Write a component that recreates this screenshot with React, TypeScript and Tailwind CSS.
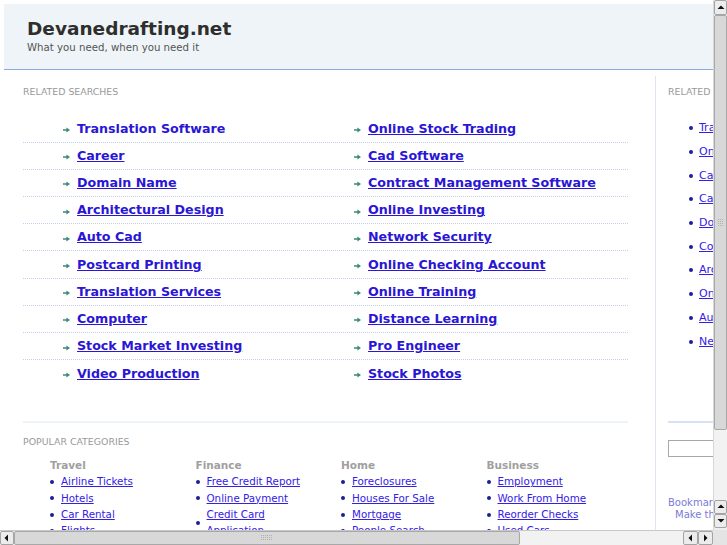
import React from "react";

const mainLinks: [string, string][] = [
  ["Translation Software", "Online Stock Trading"],
  ["Career", "Cad Software"],
  ["Domain Name", "Contract Management Software"],
  ["Architectural Design", "Online Investing"],
  ["Auto Cad", "Network Security"],
  ["Postcard Printing", "Online Checking Account"],
  ["Translation Services", "Online Training"],
  ["Computer", "Distance Learning"],
  ["Stock Market Investing", "Pro Engineer"],
  ["Video Production", "Stock Photos"],
];

const sideLinks = [
  "Translation Software",
  "Online Stock Trading",
  "Career",
  "Cad Software",
  "Domain Name",
  "Contract Management Software",
  "Architectural Design",
  "Online Investing",
  "Auto Cad",
  "Network Security",
];

const categories: { title: string; items: string[] }[] = [
  { title: "Travel", items: ["Airline Tickets", "Hotels", "Car Rental", "Flights"] },
  { title: "Finance", items: ["Free Credit Report", "Online Payment", "Credit Card Application", "Insurance"] },
  { title: "Home", items: ["Foreclosures", "Houses For Sale", "Mortgage", "People Search"] },
  { title: "Business", items: ["Employment", "Work From Home", "Reorder Checks", "Used Cars"] },
];

function Arrow() {
  return (
    <svg width="7" height="6" viewBox="0 0 7 6" className="shrink-0 mt-[3px]">
      <path d="M0 2.2h3.4V0.4L7 3 3.4 5.6V3.8H0z" fill="#3a8a7a" />
    </svg>
  );
}

function Tri({ dir }: { dir: "up" | "down" | "left" | "right" }) {
  const d =
    dir === "up"
      ? "M0.5 5 4 1.5 7.5 5z"
      : dir === "down"
      ? "M0.5 2 4 5.5 7.5 2z"
      : dir === "left"
      ? "M5 0.5 1.5 4 5 7.5z"
      : "M2 0.5 5.5 4 2 7.5z";
  return (
    <svg width="8" height="8" viewBox="0 0 8 8">
      <path d={d} fill="#111" />
    </svg>
  );
}

function Grip({ vertical }: { vertical: boolean }) {
  const dots = [];
  for (let r = 0; r < (vertical ? 4 : 3); r++)
    for (let c = 0; c < (vertical ? 3 : 6); c++)
      dots.push(<rect key={`${r}-${c}`} x={c * 2} y={r * 2} width="1" height="1" fill="#b0b0b0" />);
  return (
    <svg width={vertical ? 6 : 12} height={vertical ? 8 : 6}>
      {dots}
    </svg>
  );
}

function VScroll() {
  const btn = "flex items-center justify-center bg-[#ececec] border border-[#a4a4a4] rounded-[2px]";
  return (
    <div className="w-[14px] h-[530px] flex flex-col bg-[#eeeeee] border-l border-[#d8d8d8]">
      <div className={`${btn} h-[15px]`}>
        <Tri dir="up" />
      </div>
      <div className="h-[415px] bg-[#d8d8d8] border border-[#a8a8a8] rounded-[2px] flex items-center justify-center">
        <Grip vertical />
      </div>
      <div className="flex-1 bg-[#f2f2f2]" />
      <div className={`${btn} h-[14px]`}>
        <Tri dir="up" />
      </div>
      <div className={`${btn} h-[14px]`}>
        <Tri dir="down" />
      </div>
      <div className="h-[2px]" />
    </div>
  );
}

function HScroll() {
  const btn = "flex items-center justify-center bg-[#ececec] border border-[#a4a4a4] rounded-[2px]";
  return (
    <div className="w-[713px] h-[15px] flex bg-[#eeeeee] border-t border-[#c8c8c8]">
      <div className={`${btn} w-[14px]`}>
        <Tri dir="left" />
      </div>
      <div className="w-[506px] bg-[#d8d8d8] border border-[#a8a8a8] rounded-[2px] flex items-center justify-center">
        <Grip vertical={false} />
      </div>
      <div className="flex-1 bg-[#f2f2f2]" />
      <div className={`${btn} w-[15px]`}>
        <Tri dir="left" />
      </div>
      <div className={`${btn} w-[15px]`}>
        <Tri dir="right" />
      </div>
    </div>
  );
}

function Page() {
  return (
    <div className="w-[940px] pt-[4px] pl-[4px] bg-white">
      <div className="h-[66px] bg-[#eef4f7] border-b border-[#8ea9dd] pt-[14px] pl-[23px]">
        <div className="text-[18.5px] leading-[22px] font-bold text-[#2e2e2e]">Devanedrafting.net</div>
        <div className="mt-[1px] text-[10.2px] leading-[13px] text-[#555]">What you need, when you need it</div>
      </div>
      <div className="flex">
        <div className="w-[651px] pl-[19px]">
          <div className="w-[605px]">
            <div className="mt-[16px] text-[9.4px] leading-[11px] text-[#999] uppercase">Related Searches</div>
            <div className="mt-[18.5px] flex flex-col">
              {mainLinks.map(([a, b], i) => (
                <div
                  key={i}
                  className={`h-[27.2px] grid grid-cols-[291px_1fr] items-center ${
                    i < mainLinks.length - 1 ? "border-b border-dotted border-[#c2d0ea]" : ""
                  }`}
                >
                  {[a, b].map((t, j) => (
                    <div key={j} className="pl-[40px] flex items-center gap-[7px]">
                      <Arrow />
                      <a
                        className={`text-[12.67px] leading-[16px] font-bold text-[#2a16d4] ${
                          i === 0 && j === 0 ? "no-underline" : "underline"
                        }`}
                      >
                        {t}
                      </a>
                    </div>
                  ))}
                </div>
              ))}
            </div>
            <div className="mt-[33.5px] h-[2px] bg-[#eef2f9]" />
            <div className="mt-[13.5px] text-[9.4px] leading-[11px] text-[#999] uppercase">Popular Categories</div>
            <div className="mt-[12px] pl-[27px] grid grid-cols-[145.5px_145.5px_145.5px_145.5px]">
              {categories.map((c) => (
                <div key={c.title}>
                  <div className="text-[10.5px] leading-[13px] font-bold text-[#a0a0a0]">{c.title}</div>
                  <div className="mt-[1px] flex flex-col">
                    {c.items.map((it) => (
                      <div key={it} className="flex items-center min-h-[16.3px]">
                        <span className="w-[4px] h-[4px] rounded-full bg-[#1e1e9a] shrink-0 mr-[7px] mt-[1px]" />
                        <a className="w-[100px] text-[10.3px] leading-[16.3px] text-[#3320e6] underline">{it}</a>
                      </div>
                    ))}
                  </div>
                </div>
              ))}
            </div>
          </div>
        </div>
        <div className="flex-1 mt-[6px] border-l border-[#dde5f2] pl-[12px] h-[470px]">
          <div className="pt-[10px] text-[9.4px] leading-[11px] text-[#999] uppercase">Related</div>
          <div className="mt-[19px] flex flex-col">
            {sideLinks.map((t) => (
              <div key={t} className="h-[23.7px] flex items-center pl-[21px]">
                <span className="w-[4px] h-[4px] rounded-full bg-[#1e1e9a] shrink-0 mr-[6px] mt-[1px]" />
                <a className="text-[11px] leading-[13px] text-[#3320e6] underline whitespace-nowrap">{t}</a>
              </div>
            ))}
          </div>
          <div className="mt-[68px] h-[2px] bg-[#d9e2f2]" />
          <div className="mt-[17px] h-[17px] w-[200px] border border-[#a8a8a8] bg-white" />
          <div className="mt-[40.5px] text-[10px] leading-[12px] text-[#7a7ad8]">Bookmark this page</div>
          <div className="pl-[7px] text-[10px] leading-[12px] text-[#7a7ad8]">Make this your homepage</div>
        </div>
      </div>
    </div>
  );
}

export default function App() {
  return (
    <div className="w-[727px] h-[545px] flex flex-col overflow-hidden bg-white font-['DejaVu_Sans',sans-serif]">
      <div className="flex h-[530px]">
        <div className="w-[713px] h-[530px] overflow-hidden">
          <Page />
        </div>
        <VScroll />
      </div>
      <div className="flex h-[15px]">
        <HScroll />
        <div className="w-[14px] h-[15px] bg-[#e4e4e4]" />
      </div>
    </div>
  );
}
